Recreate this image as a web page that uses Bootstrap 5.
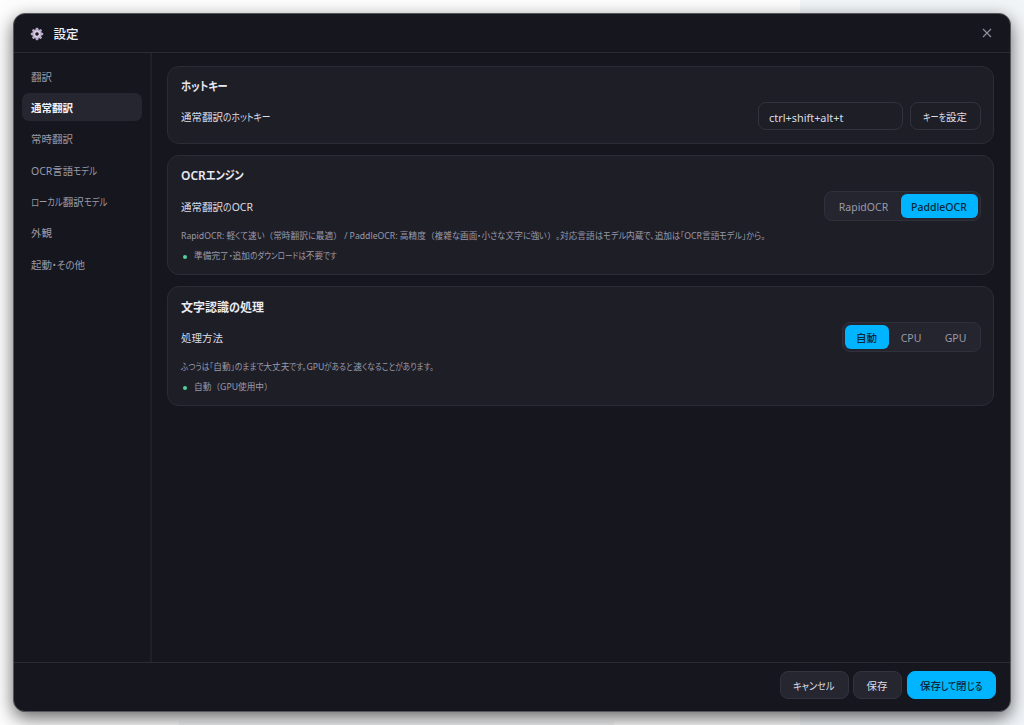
<!DOCTYPE html>
<html lang="ja" data-bs-theme="dark">
<head>
<meta charset="utf-8">
<title>設定</title>
<link href="https://cdn.jsdelivr.net/npm/bootstrap@5.3.0/dist/css/bootstrap.min.css" rel="stylesheet">
<style>
html,body{height:725px;overflow:hidden}
body{font-family:"Noto Sans","Noto Sans CJK JP",sans-serif;font-size:10.5px;line-height:16px;color:#dfdfe6;padding:13px;
 background:linear-gradient(#f4f5f6,#f4f5f6) 179px 721px/435px 4px no-repeat,linear-gradient(#f1f5f8,#f1f5f9) 800px 0/224px 725px no-repeat,#fdfdfd}
.win{height:699px;background:#16161e;border:1px solid #55555c;border-radius:12px;box-shadow:0 6px 18px rgba(0,0,0,.6);overflow:hidden}
.bar-top{height:39px;border-bottom:1px solid #2b2b34;padding:1px 15px 0 16px}
.bar-top h1{font-size:12.5px;font-weight:500;line-height:18px;color:#f0f0f5;margin:2px 0 0 9.5px}
.x-btn{width:16px;height:16px;margin:-2px 0 0;background:none;border:0;padding:0;line-height:0}
.side{width:138px;border-right:2px solid #202029;padding:9px 8px}
.side .nav-link{height:28px;margin-bottom:3.4px;padding:6.5px 9px 5px;border-radius:7px;color:#9a9aa8;white-space:nowrap}
.side .nav-link.active{background:#262631;color:#f2f2f7;font-weight:600}
.main-pane{padding:13px 16px 0 15px}
.panel{background:#1e1e27;border:1px solid #2c2c36;border-radius:12px;padding:12px 12.5px 0 13px;margin-bottom:11px}
.panel h2{font-size:12px;font-weight:600;line-height:16px;margin:0;color:#e9e9ef}
.p1{height:78px}.p2{height:120px;margin-bottom:12px}.p3{height:120px;margin-top:-1px}
.p3 h2{padding-top:1px;margin-bottom:-1px}
.opt{height:30px;margin-top:7px;color:#dcdce4}
.opt>span{padding-top:2px}
.p1 .opt{margin-top:6px}
.field{width:145px;height:28px;padding:2px 10px 0 10px;margin-right:6.5px;font-size:10.9px;background:#1e1e27;border:1px solid #33333e;border-radius:8px;color:#dcdce4}
.field:focus{box-shadow:none}
.b{height:28px;padding:1px 12px 0;font-size:10.5px;line-height:16px;border-radius:8px;border:1px solid #33333e;background:#262631;color:#dcdce4;white-space:nowrap;display:flex;align-items:center;justify-content:center}
.b-flat{background:#1e1e27;width:71px}
.b-blue{background:#00b4ff;border-color:#00b4ff;color:#08293a;font-weight:500;width:89px}
.seg{height:30px;border:1px solid #30303b;border-radius:8px;background:#25252f;padding:2px}
.seg label{height:24px;line-height:26px;border-radius:6px;text-align:center;color:#9a9aa8}
.seg .on{background:#00b4ff;color:#08293a;font-weight:500}
.hint{font-size:8.7px;line-height:14px;color:#9a9aa8;white-space:nowrap}
.h1st{margin-top:8px}
.h2nd{margin-top:6px}
.dot{width:4px;height:4px;border-radius:50%;background:#4fd39a;margin:1px 7px 0 2px}
.bar-bot{height:49px;border-top:1px solid #2b2b34;padding:0 14.5px 4px}
[data-w]{white-space:nowrap}
.kana{display:inline-block;transform-origin:0 50%;font-feature-settings:"palt"}
</style>
</head>
<body>
<div class="win d-flex flex-column">
 <header class="bar-top d-flex align-items-center flex-shrink-0">
  <svg width="14" height="14" viewBox="-7 -7 14 14"><g fill="#b7a9c8"><circle r="4.8"/><g id="t"><rect x="-1.3" y="-6.2" width="2.6" height="12.4" rx=".7"/><rect x="-6.2" y="-1.3" width="12.4" height="2.6" rx=".7"/></g><use href="#t" transform="rotate(45)"/></g><circle r="3.4" fill="#d8cde2"/><circle r="1.8" fill="#1b1822"/></svg>
  <h1>設定</h1>
  <button class="x-btn ms-auto" aria-label="閉じる"><svg width="16" height="16" viewBox="0 0 16 16" stroke="#92929f" stroke-width="1.1"><path d="M4 4l8 8M12 4l-8 8"/></svg></button>
 </header>
 <div class="d-flex flex-grow-1">
  <nav class="side nav flex-column flex-nowrap flex-shrink-0">
   <a class="nav-link">翻訳</a>
   <a class="nav-link active">通常翻訳</a>
   <a class="nav-link">常時翻訳</a>
   <a class="nav-link"><span data-w="66.5">OCR言語モデル</span></a>
   <a class="nav-link"><span data-w="76">ローカル翻訳モデル</span></a>
   <a class="nav-link">外観</a>
   <a class="nav-link"><span data-w="54">起動・その他</span></a>
  </nav>
  <main class="main-pane flex-grow-1">
   <section class="panel p1">
    <h2><span data-w="46.5">ホットキー</span></h2>
    <div class="opt d-flex align-items-center">
     <span class="me-auto" data-w="89.5">通常翻訳のホットキー</span>
     <input class="form-control field" value="ctrl+shift+alt+t">
     <button class="btn b b-flat"><span data-w="44">キーを設定</span></button>
    </div>
   </section>
   <section class="panel p2">
    <h2><span data-w="62.5">OCRエンジン</span></h2>
    <div class="opt d-flex align-items-center">
     <span class="me-auto" data-w="72">通常翻訳のOCR</span>
     <div class="seg d-flex" style="width:157px"><label style="width:74px">RapidOCR</label><label class="on" style="width:77px">PaddleOCR</label></div>
    </div>
    <div class="hint h1st"><span data-w="584.5">RapidOCR: 軽くて速い（常時翻訳に最適） / PaddleOCR: 高精度（複雑な画面・小さな文字に強い）。対応言語はモデル内蔵で、追加は「OCR言語モデル」から。</span></div>
    <div class="hint h2nd d-flex align-items-center"><i class="dot"></i><span data-w="143">準備完了・追加のダウンロードは不要です</span></div>
   </section>
   <section class="panel p3">
    <h2><span data-w="83">文字認識の処理</span></h2>
    <div class="opt d-flex align-items-center">
     <span class="me-auto">処理方法</span>
     <div class="seg d-flex" style="width:139px"><label class="on" style="width:44px">自動</label><label style="width:45px">CPU</label><label style="width:44px">GPU</label></div>
    </div>
    <div class="hint h1st"><span data-w="252.5">ふつうは「自動」のままで大丈夫です。GPUがあると速くなることがあります。</span></div>
    <div class="hint h2nd d-flex align-items-center"><i class="dot"></i><span>自動（GPU使用中）</span></div>
   </section>
  </main>
 </div>
 <footer class="bar-bot d-flex align-items-center justify-content-end flex-shrink-0">
  <button class="btn b" style="width:69px;margin-right:4px"><span data-w="41.5">キャンセル</span></button>
  <button class="btn b" style="width:49px;margin-right:5px">保存</button>
  <button class="btn b b-blue"><span data-w="62">保存して閉じる</span></button>
 </footer>
</div>
<script src="https://cdn.jsdelivr.net/npm/bootstrap@5.3.0/dist/js/bootstrap.bundle.min.js"></script>
<script>
document.querySelectorAll('[data-w]').forEach(el=>{
  el.innerHTML=el.textContent.replace(/[\u3001\u3002\u300c\u300d\u3040-\u30ff]+/g,m=>'<span class="kana">'+m+'</span>');
  const runs=[...el.querySelectorAll('.kana')];
  const ws=runs.map(r=>r.getBoundingClientRect().width);
  const kana=ws.reduce((a,b)=>a+b,0);
  const r=document.createRange();r.selectNodeContents(el);
  const full=r.getBoundingClientRect().width;
  const s=(+el.dataset.w-(full-kana))/kana;
  runs.forEach((n,i)=>{n.style.transform='scaleX('+s+')';n.style.marginRight=(ws[i]*(s-1))+'px'});
});
</script>
</body>
</html>
